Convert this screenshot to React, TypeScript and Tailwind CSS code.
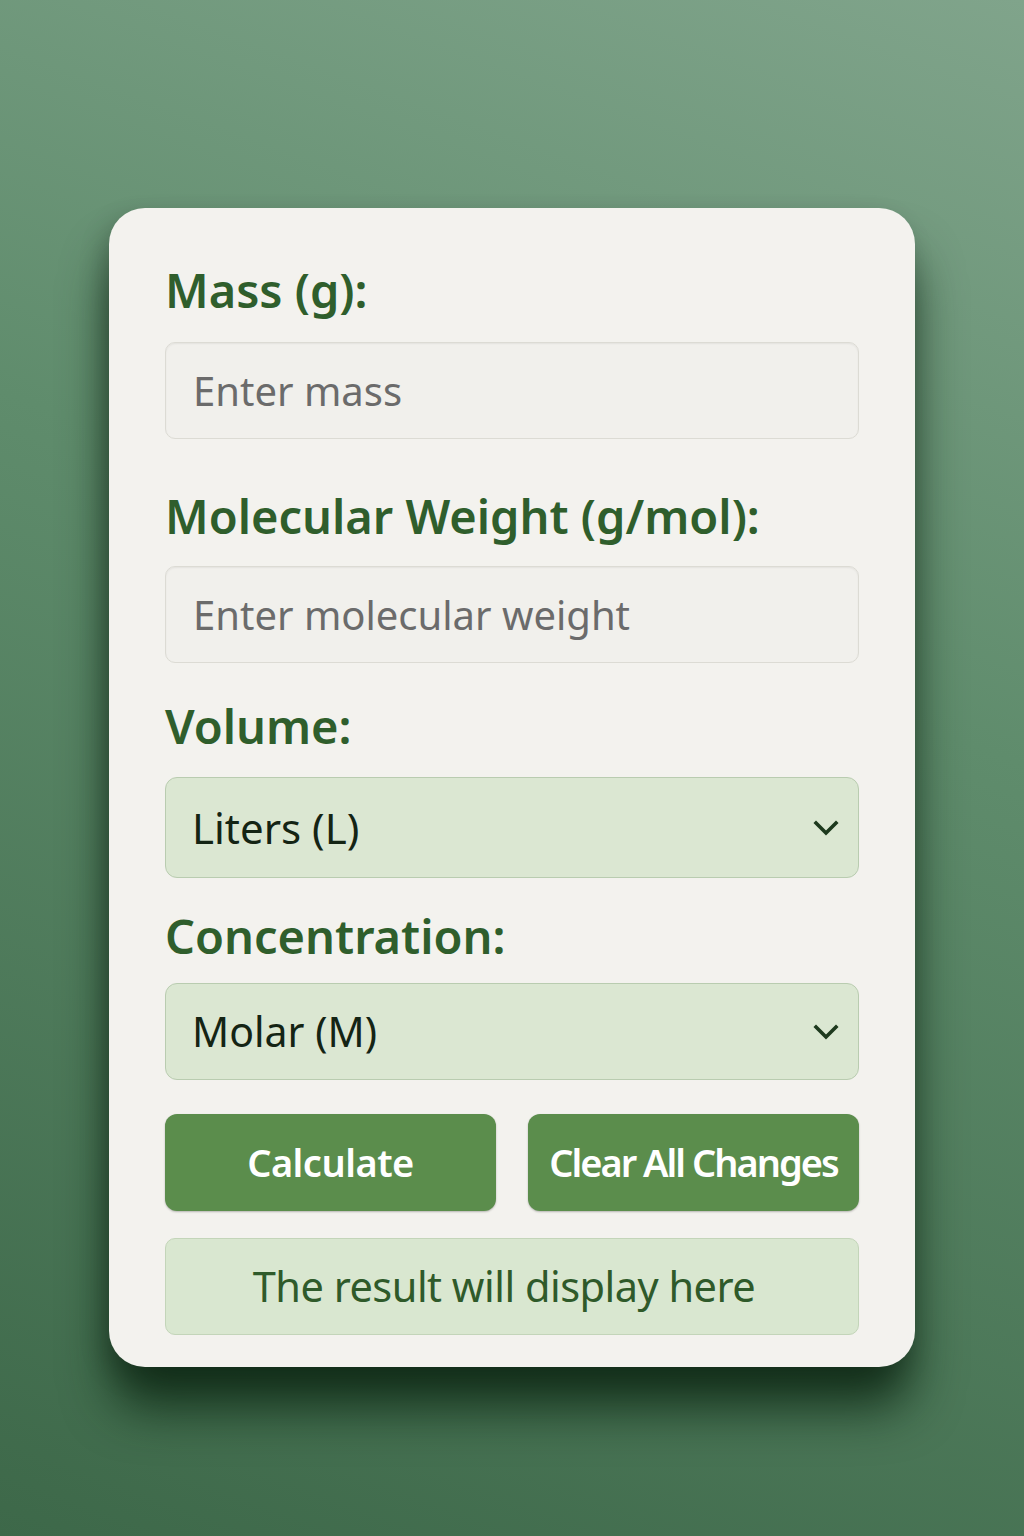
import { useState } from "react";

const font = { fontFamily: '"Noto Sans", "Open Sans", sans-serif' };

function Chevron() {
  return (
    <svg
      width="26"
      height="18"
      viewBox="0 0 26 18"
      className="pointer-events-none absolute right-[20px] top-1/2 -translate-y-1/2"
    >
      <path d="M3 4 L13 14 L23 4" fill="none" stroke="#1e3a1e" strokeWidth="3.6" strokeLinecap="square" />
    </svg>
  );
}

function Label({ children, className = "" }: { children: React.ReactNode; className?: string }) {
  return (
    <label className={`block text-[47px] font-semibold leading-[56px] text-[#2f5e2c] ${className}`}>
      {children}
    </label>
  );
}

export default function App() {
  const [mass, setMass] = useState("");
  const [weight, setWeight] = useState("");
  const [volume, setVolume] = useState("L");
  const [conc, setConc] = useState("M");
  const [result, setResult] = useState("The result will display here");

  const calculate = () => {
    const m = parseFloat(mass);
    const w = parseFloat(weight);
    if (!m || !w) return;
    setResult(`${(m / w).toFixed(4)} mol`);
  };

  const clearAll = () => {
    setMass("");
    setWeight("");
    setVolume("L");
    setConc("M");
    setResult("The result will display here");
  };

  return (
    <div
      className="min-h-screen w-full bg-[linear-gradient(200deg,#80a48b_0%,#5f8c6c_40%,#3d6849_100%)] pt-[208px] pb-[170px]"
      style={font}
    >
      <div className="mx-auto w-[806px] rounded-[36px] bg-[#f3f2ee] px-[56px] pt-[54px] pb-[32px] shadow-[0_44px_50px_-4px_rgba(8,32,14,0.8),_-6px_10px_24px_rgba(0,0,0,0.2)]">
        <Label>Mass (g):</Label>
        <input
          value={mass}
          onChange={(e) => setMass(e.target.value)}
          placeholder="Enter mass"
          className="mt-[24px] block h-[97px] w-full rounded-[10px] border border-[#dcdbd4] bg-[#f1f0ec] px-[27px] text-[40px] text-[#333] placeholder:text-[#6b6b6b] shadow-[inset_0_1px_2px_rgba(0,0,0,0.06)] outline-none"
        />

        <Label className="mt-[49px]">Molecular Weight (g/mol):</Label>
        <input
          value={weight}
          onChange={(e) => setWeight(e.target.value)}
          placeholder="Enter molecular weight"
          className="mt-[22px] block h-[97px] w-full rounded-[10px] border border-[#dcdbd4] bg-[#f1f0ec] px-[27px] text-[40px] text-[#333] placeholder:text-[#6b6b6b] shadow-[inset_0_1px_2px_rgba(0,0,0,0.06)] outline-none"
        />

        <Label className="mt-[35px]">Volume:</Label>
        <div className="relative mt-[23px]">
          <select
            value={volume}
            onChange={(e) => setVolume(e.target.value)}
            className="block h-[101px] w-full appearance-none rounded-[12px] border border-[#b9ccb0] bg-[#dbe7d2] px-[26px] text-[42px] text-[#142414] outline-none"
          >
            <option value="L">Liters (L)</option>
            <option value="mL">Milliliters (mL)</option>
          </select>
          <Chevron />
        </div>

        <Label className="mt-[30px]">Concentration:</Label>
        <div className="relative mt-[19px]">
          <select
            value={conc}
            onChange={(e) => setConc(e.target.value)}
            className="block h-[97px] w-full appearance-none rounded-[12px] border border-[#b9ccb0] bg-[#dbe7d2] px-[26px] text-[41px] text-[#142414] outline-none"
          >
            <option value="M">Molar (M)</option>
            <option value="mM">Millimolar (mM)</option>
          </select>
          <Chevron />
        </div>

        <div className="mt-[34px] grid grid-cols-2 gap-[32px]">
          <button
            onClick={calculate}
            className="h-[97px] rounded-[12px] bg-[#5b8d4c] text-[38px] font-semibold tracking-[-0.5px] text-white shadow-[0_1px_2px_rgba(0,0,0,0.25)]"
          >
            Calculate
          </button>
          <button
            onClick={clearAll}
            className="h-[97px] rounded-[12px] bg-[#5b8d4c] text-[38px] font-semibold tracking-[-2px] text-white shadow-[0_1px_2px_rgba(0,0,0,0.25)]"
          >
            Clear All Changes
          </button>
        </div>

        <div className="mt-[27px] flex h-[97px] items-center justify-center rounded-[10px] border border-[#c3d5b9] bg-[#d9e7d0] pr-[16px] text-[41.5px] tracking-[-0.5px] text-[#2f5a2a]">
          {result}
        </div>
      </div>
    </div>
  );
}
